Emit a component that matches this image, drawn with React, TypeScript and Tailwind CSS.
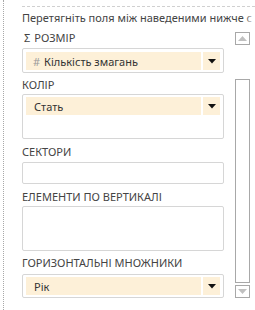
import React from "react";

const font = { fontFamily: '"Segoe UI", "Noto Sans", "Open Sans", sans-serif' };

function Arrow() {
  return (
    <svg width="8" height="5" viewBox="0 0 8 5">
      <polygon points="0,0 8,0 4,4.5" fill="#111" />
    </svg>
  );
}

function Field({ label, hash }: { label: string; hash?: boolean }) {
  return (
    <div className="flex h-[18px]">
      <div className="flex-1 bg-[#fdf0d8] flex items-center pl-[5px] text-[11px] text-[#333] leading-none">
        {hash && <span className="text-[#9a9a9a] ml-[2px] mr-[4px]">#</span>}
        <span className={hash ? "" : "pl-[3px]"}>{label}</span>
      </div>
      <div className="w-[2px] bg-white" />
      <div className="w-[17px] bg-[#fdf0d8] flex items-center justify-center">
        <Arrow />
      </div>
    </div>
  );
}

function Label({ children, className }: { children: React.ReactNode; className?: string }) {
  return (
    <div className={"text-[11px] leading-[14px] text-[#444] whitespace-nowrap " + (className || "")}>
      {children}
    </div>
  );
}

export default function App() {
  return (
    <div className="relative w-[255px] h-[310px] bg-white overflow-hidden" style={font}>
      <div className="absolute left-[3px] top-0 bottom-0 border-l border-dotted border-[#a8a8a8]" />
      <div className="pl-[22px] pt-[6px]">
        <div className="border-t border-dashed border-[#d0d0d0]" />
        <div className="relative mt-[4px] overflow-hidden">
          <Label className="text-[#3a3a3a]">Перетягніть поля між наведеними нижче с</Label>
          <div className="absolute right-0 top-0 h-[14px] w-[10px] bg-gradient-to-r from-transparent to-white" />
        </div>
        <div className="flex">
          <div className="w-[202px]">
            <Label className="mt-[6px] pl-[2px]">
              <span className="mr-[4px]">Σ</span>РОЗМІР
            </Label>
            <div className="mt-[3px] h-[25px] border border-[#d6d6d6] rounded-[2px] p-[3px]">
              <Field label="Кількість змагань" hash />
            </div>
            <Label className="mt-[5px]">КОЛІР</Label>
            <div className="mt-[2px] h-[45px] border border-[#d6d6d6] rounded-[2px] px-[3px] pt-[2px]">
              <Field label="Стать" />
            </div>
            <Label className="mt-[6px]">СЕКТОРИ</Label>
            <div className="mt-[3px] h-[22px] border border-[#d6d6d6] rounded-[2px]" />
            <Label className="mt-[6px]">ЕЛЕМЕНТИ ПО ВЕРТИКАЛІ</Label>
            <div className="mt-[2px] h-[45px] border border-[#d6d6d6] rounded-[2px]" />
            <Label className="mt-[5px]">ГОРИЗОНТАЛЬНІ МНОЖНИКИ</Label>
            <div className="mt-[4px] h-[24px] border border-[#d6d6d6] rounded-[2px] px-[3px] pt-[2px]">
              <Field label="Рік" />
            </div>
          </div>
          <div className="ml-[11px] w-[15px] flex flex-col">
            <div className="mt-[7px] h-[13px] border border-[#a8a8a8] flex items-center justify-center">
              <svg width="9" height="5" viewBox="0 0 9 5">
                <polygon points="0,5 9,5 4.5,0" fill="#c0c0c0" />
              </svg>
            </div>
            <div className="mt-[34px] h-[204px] border border-[#a8a8a8]" />
            <div className="mt-[2px] h-[13px] border border-[#a8a8a8] flex items-center justify-center">
              <svg width="9" height="5" viewBox="0 0 9 5">
                <polygon points="0,0 9,0 4.5,5" fill="#c0c0c0" />
              </svg>
            </div>
          </div>
        </div>
      </div>
    </div>
  );
}
